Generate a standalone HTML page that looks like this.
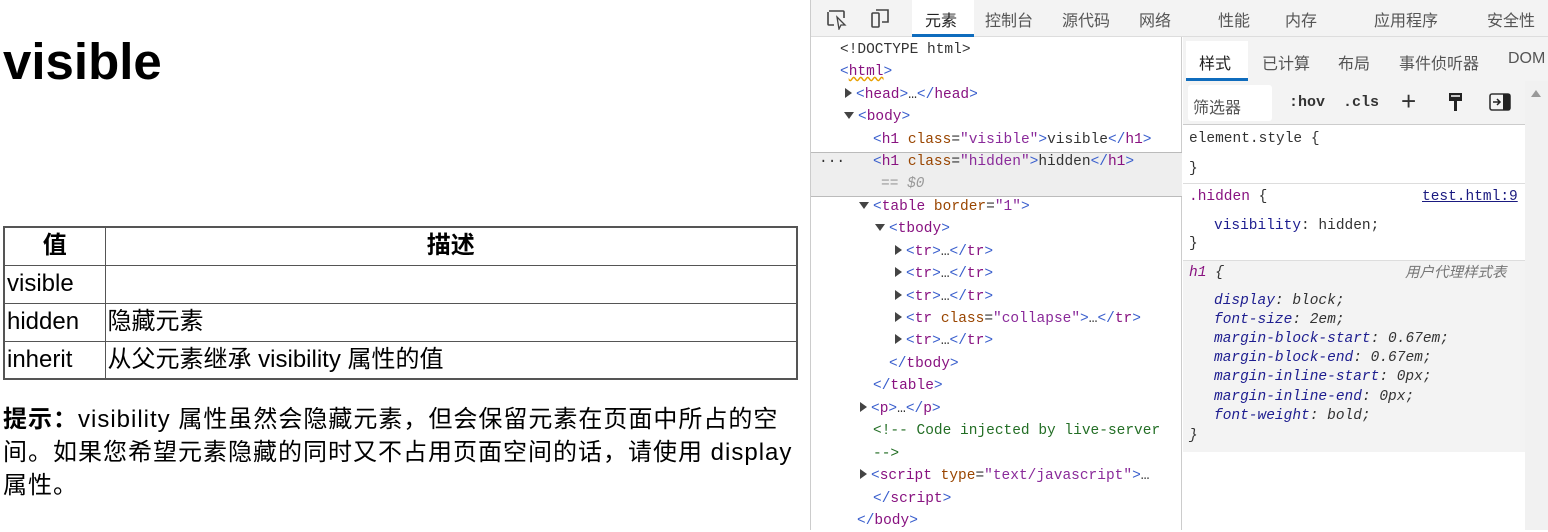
<!DOCTYPE html>
<html><head><meta charset="utf-8">
<style>
*{margin:0;padding:0;box-sizing:border-box}
body{width:1548px;height:530px;overflow:hidden;background:#fff;font-family:"Liberation Sans","Noto Sans CJK SC",sans-serif;position:relative}
.abs{position:absolute;white-space:nowrap}
h1{position:absolute;left:3px;top:31px;font-size:51px;font-weight:bold;line-height:62px;letter-spacing:0}
table{position:absolute;left:3px;top:226px;width:795px;border-collapse:collapse;border:2px solid #555;font-size:24px}
td,th{border:1px solid #555;height:38px;padding:0 2px;line-height:36px;text-align:left}
th{text-align:center;font-weight:bold}
.p{position:absolute;left:3px;top:403px;width:810px;font-size:24px;line-height:33px;white-space:nowrap;letter-spacing:1px}
.dt{position:absolute;left:810px;top:0;width:738px;height:530px;border-left:1px solid #ccc;font-family:"Liberation Mono","Noto Sans CJK SC",monospace}
.tb{position:absolute;left:0;top:0;width:738px;height:37px;background:#f3f3f3;border-bottom:1px solid #ddd;font-family:"Liberation Sans","Noto Sans CJK SC",sans-serif;font-size:16px;color:#555}
.tb span{position:absolute;top:7px}
.el{position:absolute;left:0;top:37px;width:371px;height:493px;font-size:14.5px;border-right:1px solid #ccc}
.l{position:absolute;white-space:nowrap;height:22px;line-height:22px;color:#333}
.t{color:#881280}.b{color:#3a5fcd}.a{color:#994500}.v{color:#8a2a9a}.c{color:#236e25}
.tri{display:inline-block;width:0;height:0;border-left:7px solid #444;border-top:5px solid transparent;border-bottom:5px solid transparent;margin-right:4px}
.trd{display:inline-block;width:0;height:0;border-top:7px solid #444;border-left:5px solid transparent;border-right:5px solid transparent;margin-right:4px;vertical-align:1px}
.st{position:absolute;left:372px;top:37px;width:366px;height:493px;font-size:14.5px}
.s{position:absolute;white-space:nowrap;line-height:20px;color:#333}
.i{font-style:italic;color:#1d1d8f}
</style></head><body>
<h1>visible</h1>
<table>
<tr><th style="width:101px">值</th><th>描述</th></tr>
<tr><td>visible</td><td></td></tr>
<tr><td>hidden</td><td>隐藏元素</td></tr>
<tr><td>inherit</td><td>从父元素继承 visibility 属性的值</td></tr>
</table>
<div class="p"><b>提示：</b>visibility 属性虽然会隐藏元素，但会保留元素在页面中所占的空<br>间。如果您希望元素隐藏的同时又不占用页面空间的话，请使用 display<br>属性。</div>

<div class="dt">
<div class="tb">
<svg class="abs" style="left:14px;top:8px" width="24" height="22" viewBox="0 0 24 22"><path d="M4 3h14a1 1 0 0 1 1 1v6M9 17H4a1 1 0 0 1-1-1V4" fill="none" stroke="#444" stroke-width="1.6"/><path d="M12 9l8 8-4 0-2 4z" fill="none" stroke="#444" stroke-width="1.3"/></svg>
<svg class="abs" style="left:58px;top:7px" width="24" height="24" viewBox="0 0 24 24"><rect x="3" y="6" width="7" height="14" rx="1" fill="none" stroke="#444" stroke-width="1.6"/><path d="M7 3h12v12h-6" fill="none" stroke="#444" stroke-width="1.6"/></svg>
<div class="abs" style="left:101px;top:0;width:62px;height:37px;background:#fff;border-bottom:3px solid #0f6cbd"></div>
<span style="left:114px;color:#222">元素</span>
<span style="left:174px">控制台</span>
<span style="left:251px">源代码</span>
<span style="left:328px">网络</span>
<span style="left:407px">性能</span>
<span style="left:474px">内存</span>
<span style="left:563px">应用程序</span>
<span style="left:676px">安全性</span>
</div>
<div class="el">
<div class="l" style="left:29px;top:2px">&lt;!DOCTYPE html&gt;</div>
<div class="l" style="left:29px;top:24px"><span class="b">&lt;</span><span class="t" style="text-decoration:underline wavy #e8a000">html</span><span class="b">&gt;</span></div>
<div class="l" style="left:34px;top:47px"><span class="tri"></span><span class="b">&lt;</span><span class="t">head</span><span class="b">&gt;</span>…<span class="b">&lt;/</span><span class="t">head</span><span class="b">&gt;</span></div>
<div class="l" style="left:33px;top:69px"><span class="trd"></span><span class="b">&lt;</span><span class="t">body</span><span class="b">&gt;</span></div>
<div class="l" style="left:62px;top:92px"><span class="b">&lt;</span><span class="t">h1</span> <span class="a">class</span>=<span class="v">"visible"</span><span class="b">&gt;</span>visible<span class="b">&lt;/</span><span class="t">h1</span><span class="b">&gt;</span></div>
<div class="abs" style="left:0;top:115px;width:371px;height:45px;background:#eee;border-top:1px solid #bbb;border-bottom:1px solid #bbb"></div>
<div class="l" style="left:8px;top:114px">···</div>
<div class="l" style="left:62px;top:114px"><span class="b">&lt;</span><span class="t">h1</span> <span class="a">class</span>=<span class="v">"hidden"</span><span class="b">&gt;</span>hidden<span class="b">&lt;/</span><span class="t">h1</span><span class="b">&gt;</span></div>
<div class="l" style="left:70px;top:136px;color:#999;font-style:italic">== $0</div>
<div class="l" style="left:48px;top:159px"><span class="trd"></span><span class="b">&lt;</span><span class="t">table</span> <span class="a">border</span>=<span class="v">"1"</span><span class="b">&gt;</span></div>
<div class="l" style="left:64px;top:181px"><span class="trd"></span><span class="b">&lt;</span><span class="t">tbody</span><span class="b">&gt;</span></div>
<div class="l" style="left:84px;top:204px"><span class="tri"></span><span class="b">&lt;</span><span class="t">tr</span><span class="b">&gt;</span>…<span class="b">&lt;/</span><span class="t">tr</span><span class="b">&gt;</span></div>
<div class="l" style="left:84px;top:226px"><span class="tri"></span><span class="b">&lt;</span><span class="t">tr</span><span class="b">&gt;</span>…<span class="b">&lt;/</span><span class="t">tr</span><span class="b">&gt;</span></div>
<div class="l" style="left:84px;top:249px"><span class="tri"></span><span class="b">&lt;</span><span class="t">tr</span><span class="b">&gt;</span>…<span class="b">&lt;/</span><span class="t">tr</span><span class="b">&gt;</span></div>
<div class="l" style="left:84px;top:271px"><span class="tri"></span><span class="b">&lt;</span><span class="t">tr</span> <span class="a">class</span>=<span class="v">"collapse"</span><span class="b">&gt;</span>…<span class="b">&lt;/</span><span class="t">tr</span><span class="b">&gt;</span></div>
<div class="l" style="left:84px;top:293px"><span class="tri"></span><span class="b">&lt;</span><span class="t">tr</span><span class="b">&gt;</span>…<span class="b">&lt;/</span><span class="t">tr</span><span class="b">&gt;</span></div>
<div class="l" style="left:78px;top:316px"><span class="b">&lt;/</span><span class="t">tbody</span><span class="b">&gt;</span></div>
<div class="l" style="left:62px;top:338px"><span class="b">&lt;/</span><span class="t">table</span><span class="b">&gt;</span></div>
<div class="l" style="left:49px;top:361px"><span class="tri"></span><span class="b">&lt;</span><span class="t">p</span><span class="b">&gt;</span>…<span class="b">&lt;/</span><span class="t">p</span><span class="b">&gt;</span></div>
<div class="l c" style="left:62px;top:383px">&lt;!-- Code injected by live-server</div>
<div class="l c" style="left:62px;top:406px">--&gt;</div>
<div class="l" style="left:49px;top:428px"><span class="tri"></span><span class="b">&lt;</span><span class="t">script</span> <span class="a">type</span>=<span class="v">"text/javascript"</span><span class="b">&gt;</span>…</div>
<div class="l" style="left:62px;top:451px"><span class="b">&lt;/</span><span class="t">script</span><span class="b">&gt;</span></div>
<div class="l" style="left:46px;top:473px"><span class="b">&lt;/</span><span class="t">body</span><span class="b">&gt;</span></div>
</div>
<div class="st">
<div class="abs" style="left:0;top:0;width:366px;height:44px;background:#f3f3f3;font-family:'Liberation Sans','Noto Sans CJK SC',sans-serif;font-size:16px;color:#555">
<div class="abs" style="left:3px;top:4px;width:62px;height:40px;background:#fff;border-bottom:3px solid #0f6cbd"></div>
<span class="abs" style="left:16px;top:13px;color:#222">样式</span>
<span class="abs" style="left:79px;top:13px">已计算</span>
<span class="abs" style="left:155px;top:13px">布局</span>
<span class="abs" style="left:216px;top:13px">事件侦听器</span>
<span class="abs" style="left:325px;top:13px">DOM</span>
</div>
<div class="abs" style="left:0;top:44px;width:342px;height:44px;background:#f3f3f3;border-bottom:1px solid #ccc;font-size:15px">
<div class="abs" style="left:5px;top:4px;width:84px;height:36px;background:#fff;border-radius:3px;font-family:'Liberation Sans','Noto Sans CJK SC',sans-serif;font-size:16px;color:#555;padding:9px 0 0 5px">筛选器</div>
<b class="abs" style="left:106px;top:13px;color:#333">:hov</b>
<b class="abs" style="left:160px;top:13px;color:#333">.cls</b>
<span class="abs" style="left:218px;top:5px;font-size:26px;color:#333;font-family:'Liberation Sans'">+</span>
<svg class="abs" style="left:264px;top:10px" width="18" height="22" viewBox="0 0 18 22"><path d="M2 2h13v8H2z M7 10h3v10H7z" fill="#222"/><path d="M4 5h9" stroke="#fff" stroke-width="1.5"/></svg>
<svg class="abs" style="left:306px;top:12px" width="22" height="18" viewBox="0 0 22 18"><rect x="1" y="1" width="20" height="16" rx="2" fill="none" stroke="#333" stroke-width="1.6"/><rect x="14" y="1" width="7" height="16" fill="#222"/><path d="M4 9h7M8 6l3 3-3 3" fill="none" stroke="#222" stroke-width="1.5"/></svg>
</div>
<div class="abs" style="left:342px;top:44px;width:24px;height:449px;background:#f1f1f1"></div>
<div class="abs" style="left:348px;top:53px;border-bottom:7px solid #999;border-left:5px solid transparent;border-right:5px solid transparent"></div>
<div class="s" style="left:6px;top:92px">element.style {</div>
<div class="s" style="left:6px;top:122px">}</div>
<div class="abs" style="left:0;top:146px;width:342px;border-top:1px solid #ddd"></div>
<div class="s" style="left:6px;top:150px"><span class="t">.hidden</span> {</div>
<div class="s" style="left:239px;top:150px;color:#1a1a80;text-decoration:underline">test.html:9</div>
<div class="s" style="left:31px;top:179px"><span style="color:#1d1d8f">visibility</span>: hidden;</div>
<div class="s" style="left:6px;top:197px">}</div>
<div class="abs" style="left:0;top:223px;width:342px;height:192px;background:#f3f3f3;border-top:1px solid #ddd"></div>
<div class="s" style="left:6px;top:226px;font-style:italic"><span class="t">h1</span> {</div>
<div class="s" style="left:222px;top:226px;font-style:italic;color:#777;font-family:'Liberation Sans','Noto Sans CJK SC',sans-serif">用户代理样式表</div>
<div class="s i" style="left:31px;top:254px">display<span style="color:#333">: block;</span></div>
<div class="s i" style="left:31px;top:273px">font-size<span style="color:#333">: 2em;</span></div>
<div class="s i" style="left:31px;top:292px">margin-block-start<span style="color:#333">: 0.67em;</span></div>
<div class="s i" style="left:31px;top:311px">margin-block-end<span style="color:#333">: 0.67em;</span></div>
<div class="s i" style="left:31px;top:330px">margin-inline-start<span style="color:#333">: 0px;</span></div>
<div class="s i" style="left:31px;top:350px">margin-inline-end<span style="color:#333">: 0px;</span></div>
<div class="s i" style="left:31px;top:369px">font-weight<span style="color:#333">: bold;</span></div>
<div class="s" style="left:6px;top:389px;font-style:italic">}</div>
</div>
</div>
</body></html>
